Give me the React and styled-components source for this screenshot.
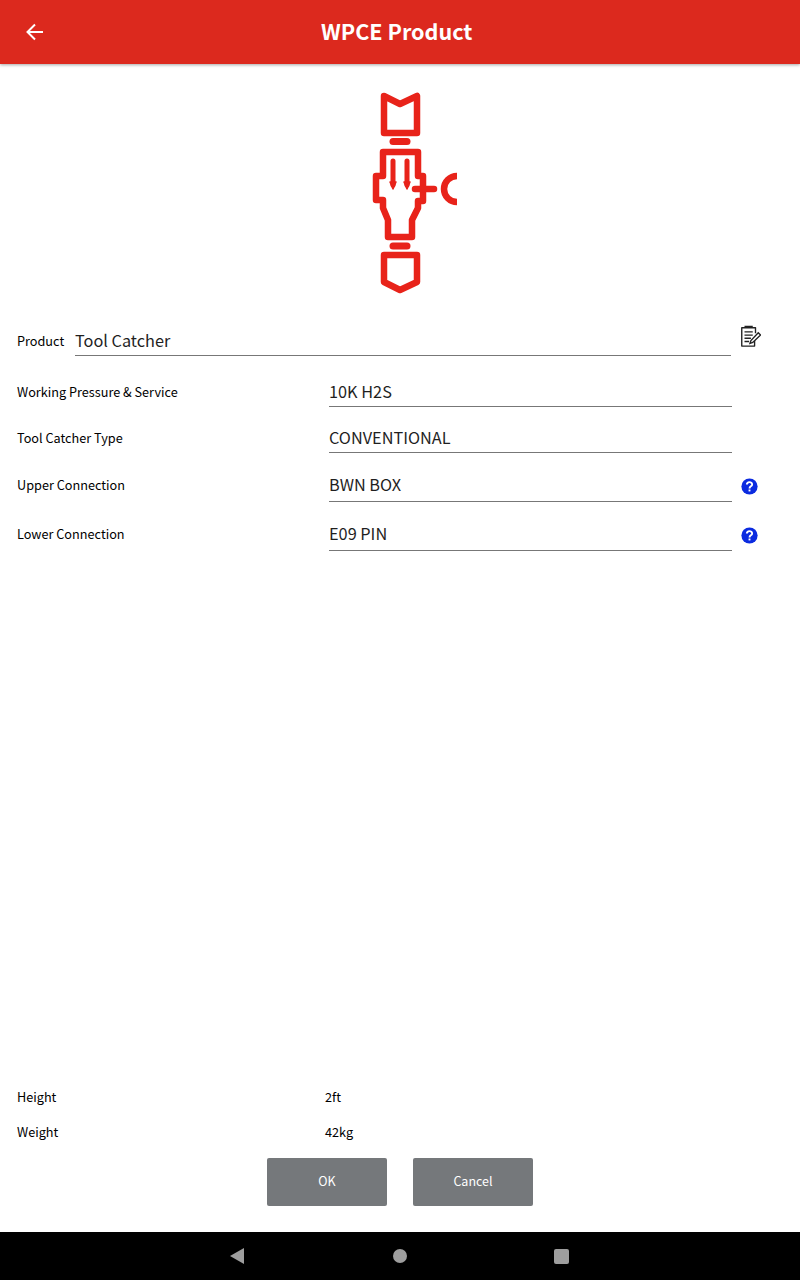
import React from 'react';
import styled, { createGlobalStyle } from 'styled-components';

const Global = createGlobalStyle`
  html, body { margin: 0; padding: 0; background: #fff; }
  body { font-family: "Noto Sans CJK JP", "Noto Sans", sans-serif; color: #1f1f1f; }
`;

const Page = styled.div`
  width: 800px;
  height: 1280px;
  display: flex;
  flex-direction: column;
  overflow: hidden;
`;

const Header = styled.header`
  height: 64px;
  flex: none;
  background: #dc291e;
  box-shadow: 0 1px 3px rgba(0, 0, 0, 0.35);
  display: flex;
  align-items: center;
  padding-left: 24px;
  position: relative;
  z-index: 1;
`;

const BackButton = styled.div`
  width: 22px;
  height: 22px;
  display: flex;
`;

const Title = styled.h1`
  margin: -3px 0 0 275px;
  font-size: 21.6px;
  font-weight: 700;
  color: #fff;
`;

const Main = styled.main`
  flex: 1;
  display: flex;
  flex-direction: column;
`;

const LogoBox = styled.div`
  height: 262px;
  padding: 21px 0 0 360px;
  box-sizing: border-box;
`;

const ProductRow = styled.div`
  display: flex;
  padding-left: 17px;
  position: relative;
`;

const ProductLabel = styled.div`
  width: 58px;
  font-size: 12.7px;
  font-weight: 400;
  line-height: 30px;
  color: #000;
`;

const Row = styled.div`
  display: grid;
  grid-template-columns: 312px 403px 36px;
  padding-left: 17px;
  margin-top: ${(p) => p.$gap}px;
  align-items: center;
`;

const Label = styled.div`
  font-size: 12.7px;
  font-weight: 400;
  color: #000;
  padding-bottom: 2px;
`;

const Field = styled.div`
  width: ${(p) => p.$width || 'auto'};
  height: ${(p) => p.$height || 30}px;
  line-height: ${(p) => (p.$height || 30) - 2}px;
  font-size: 16.3px;
  border-bottom: 1px solid #777;
  box-sizing: border-box;
`;

const HelpIcon = styled.svg`
  width: 17px;
  height: 17px;
  justify-self: start;
  margin: 2px 0 0 9px;
`;

const NoteIcon = styled.svg`
  width: 22px;
  height: 22px;
  position: absolute;
  left: 739px;
  top: -1px;
`;

const Specs = styled.div`
  margin-top: auto;
  padding-left: 17px;
`;

const SpecRow = styled.div`
  display: grid;
  grid-template-columns: 308px 1fr;
  height: 35px;
  line-height: 34px;
  font-size: 12.7px;
  font-weight: 400;
  color: #000;
`;

const Actions = styled.div`
  display: flex;
  justify-content: center;
  gap: 26px;
  margin-top: 8px;
  padding-bottom: 26px;
`;

const ActionButton = styled.button`
  width: 120px;
  height: 48px;
  padding: 0 0 4px;
  border: none;
  border-radius: 2px;
  background: #75787b;
  color: #fff;
  font-family: inherit;
  font-size: 12.5px;
  font-weight: 400;
`;

const NavBar = styled.nav`
  height: 48px;
  flex: none;
  background: #000;
  display: flex;
  align-items: center;
  padding-left: 230px;
`;

const NavBack = styled.div`
  width: 0;
  height: 0;
  border-top: 8px solid transparent;
  border-bottom: 8px solid transparent;
  border-right: 14px solid #9e9e9e;
`;

const NavHome = styled.div`
  width: 14px;
  height: 14px;
  border-radius: 50%;
  background: #9e9e9e;
  margin-left: 149px;
`;

const NavRecent = styled.div`
  width: 15px;
  height: 15px;
  border-radius: 2px;
  background: #9e9e9e;
  margin-left: 147px;
`;

const ToolLogo = () => (
  <svg width="110" height="215" viewBox="0 0 110 215" fill="none" stroke="#e8231a" strokeWidth="6.5" strokeLinejoin="round" strokeLinecap="round">
    <path d="M24 11 L40 19 L57 11 V48 H24 Z" />
    <path d="M33 56.5 H47" strokeWidth="7" />
    <path d="M23 67 H58 V91 H63 V116 H58 V123 L52 135 V152 H28 V135 L23 123 V115 H16 V91 H23 Z" />
    <path d="M55 104 H74" />
    <path d="M33 76 V100 M47 76 V100" strokeWidth="5" />
    <path d="M30 97 L33 104 L36 97 Z M44 97 L47 104 L50 97 Z" fill="#e8231a" strokeWidth="1.5" />
    <path d="M33 161 H47" strokeWidth="7" />
    <path d="M24 170 H57 V197 L40 205 L24 197 Z" />
    <path d="M97 91 A13 13 0 0 0 97 117" strokeLinecap="butt" />
  </svg>
);

const Help = () => (
  <HelpIcon viewBox="0 0 18 18">
    <circle cx="9" cy="9" r="8.6" fill="#0b2be0" />
    <path d="M6.2 7 C6.2 3.6 11.8 3.6 11.8 6.8 C11.8 9 9 8.6 9 11" fill="none" stroke="#fff" strokeWidth="2" />
    <rect x="8" y="12.2" width="2" height="2" fill="#fff" />
  </HelpIcon>
);

const Note = () => (
  <NoteIcon viewBox="0 0 24 24" fill="none" stroke="#222" strokeWidth="1.5">
    <path d="M17 14 V23 H3 V3 H18 V9" strokeLinejoin="round" />
    <path d="M6 1.5 H15 M6 7.5 H15 M6 11 H15 M6 14.5 H13 M6 18 H11" />
    <path d="M12 20 L13 17 L21 8.5 L23.5 11 L15 19 Z" fill="#fff" />
  </NoteIcon>
);

const fields = [
  { label: 'Working Pressure & Service', value: '10K H2S', gap: 21 },
  { label: 'Tool Catcher Type', value: 'CONVENTIONAL', gap: 16 },
  { label: 'Upper Connection', value: 'BWN BOX', gap: 15, height: 34, help: true },
  { label: 'Lower Connection', value: 'E09 PIN', gap: 15, height: 34, help: true },
];

const App = () => {
  return (
    <Page>
      <Global />
      <Header>
        <BackButton>
          <svg width="22" height="22" viewBox="0 0 22 22" fill="none" stroke="#fff" strokeWidth="2">
            <path d="M19 11 H4 M11 3.5 L3.5 11 L11 18.5" />
          </svg>
        </BackButton>
        <Title>WPCE Product</Title>
      </Header>
      <Main>
        <LogoBox>
          <ToolLogo />
        </LogoBox>
        <ProductRow>
          <ProductLabel>Product</ProductLabel>
          <Field $width="656px">Tool Catcher</Field>
          <Note />
        </ProductRow>
        {fields.map((f) => (
          <Row key={f.label} $gap={f.gap}>
            <Label>{f.label}</Label>
            <Field $height={f.height}>{f.value}</Field>
            {f.help && <Help />}
          </Row>
        ))}
        <Specs>
          <SpecRow><span>Height</span><span>2ft</span></SpecRow>
          <SpecRow><span>Weight</span><span>42kg</span></SpecRow>
        </Specs>
        <Actions>
          <ActionButton>OK</ActionButton>
          <ActionButton>Cancel</ActionButton>
        </Actions>
      </Main>
      <NavBar>
        <NavBack />
        <NavHome />
        <NavRecent />
      </NavBar>
    </Page>
  );
};

export default App;
